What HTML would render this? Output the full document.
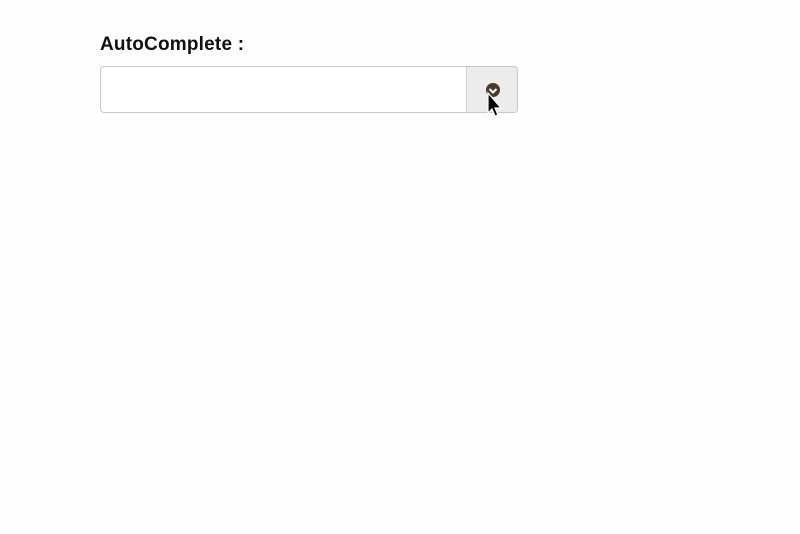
<!DOCTYPE html>
<html><head><style>
body{margin:0;width:800px;height:534px;background:#fefefe;position:relative;font-family:"Liberation Sans",sans-serif;overflow:hidden}
.lbl{position:absolute;left:100px;top:34px;font-size:19px;font-weight:bold;color:#111;letter-spacing:0.2px}
.box{position:absolute;left:100px;top:66px;width:418px;height:47px;border:1px solid #c8c8c8;border-radius:4px;background:#fff;box-sizing:border-box}
.btn{position:absolute;right:0;top:0;width:50px;height:45px;background:#ececec;border-left:1px solid #d0d0d0;border-radius:0 3px 3px 0}
</style></head><body>
<div class="lbl">AutoComplete :</div>
<div class="box"><div class="btn">
<svg width="50" height="45" style="position:absolute;left:0;top:0;overflow:visible">
<circle cx="26" cy="23" r="7" fill="#4a3a2c"/>
<path d="M22.5 22 L26 25.5 L29.5 22" stroke="#fff" stroke-width="2" fill="none"/>
<path d="M21 26 L21 46 L25 42 L28 49 L31 48 L28 41 L34 41 Z" fill="#000" stroke="#fff" stroke-width="1.2"/>
</svg>
</div></div>
</body></html>
